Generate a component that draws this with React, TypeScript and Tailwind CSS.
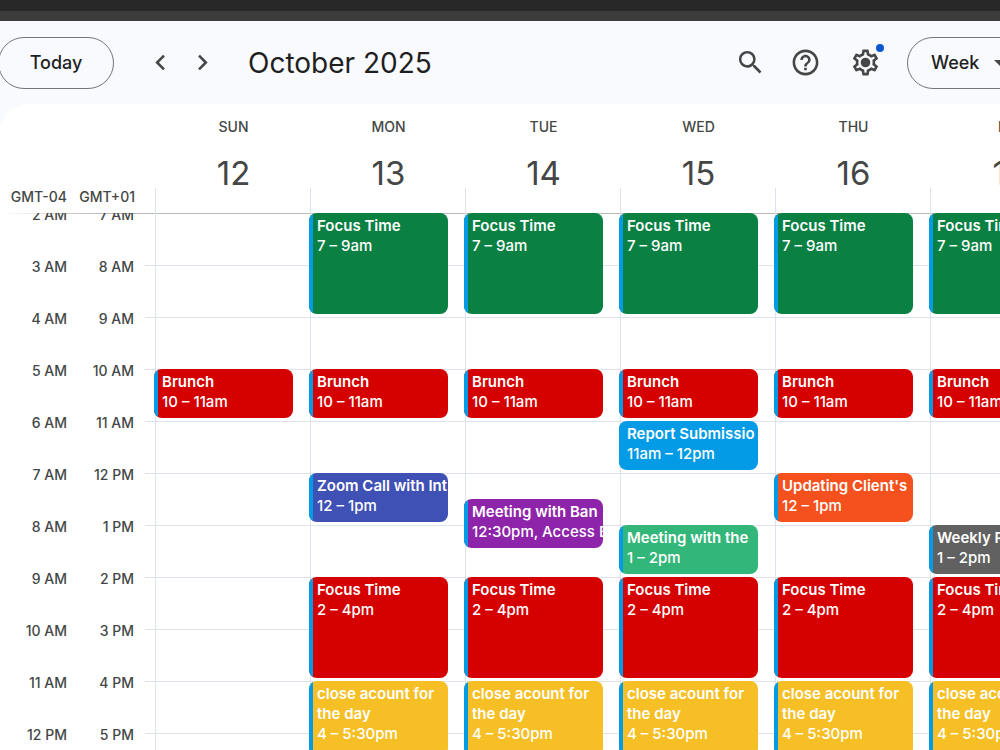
import React from 'react';
import { MdArrowDropDown, MdChevronLeft, MdChevronRight, MdHelpOutline, MdSearch } from 'react-icons/md';

interface CalendarEvent {
  title: string;
  time: string;
  // Hours on the 24h clock, halves allowed
  start: number;
  end: number;
  color: string;
  wrap?: boolean;
}

interface Day {
  name: string;
  date: number;
  events: CalendarEvent[];
}

const FIRST_HOUR = 7;

const HOURS = [
  { local: '2 AM', remote: '7 AM' },
  { local: '3 AM', remote: '8 AM' },
  { local: '4 AM', remote: '9 AM' },
  { local: '5 AM', remote: '10 AM' },
  { local: '6 AM', remote: '11 AM' },
  { local: '7 AM', remote: '12 PM' },
  { local: '8 AM', remote: '1 PM' },
  { local: '9 AM', remote: '2 PM' },
  { local: '10 AM', remote: '3 PM' },
  { local: '11 AM', remote: '4 PM' },
  { local: '12 PM', remote: '5 PM' },
  { local: '1 PM', remote: '6 PM' },
];

const morningFocus: CalendarEvent = { title: 'Focus Time', time: '7 – 9am', start: 7, end: 9, color: 'bg-[#0b8043]' };
const brunch: CalendarEvent = { title: 'Brunch', time: '10 – 11am', start: 10, end: 11, color: 'bg-[#d50000]' };
const afternoonFocus: CalendarEvent = { title: 'Focus Time', time: '2 – 4pm', start: 14, end: 16, color: 'bg-[#d50000]' };
const closeAccount: CalendarEvent = {
  title: 'close acount for the day',
  time: '4 – 5:30pm',
  start: 16,
  end: 17.5,
  color: 'bg-[#f6bf26]',
  wrap: true,
};

const workday = (...extra: CalendarEvent[]) => [morningFocus, brunch, ...extra, afternoonFocus, closeAccount];

const DAYS: Day[] = [
  { name: 'SUN', date: 12, events: [brunch] },
  {
    name: 'MON',
    date: 13,
    events: workday({ title: 'Zoom Call with Int', time: '12 – 1pm', start: 12, end: 13, color: 'bg-[#3f51b5]' }),
  },
  {
    name: 'TUE',
    date: 14,
    events: workday({ title: 'Meeting with Ban', time: '12:30pm, Access B', start: 12.5, end: 13.5, color: 'bg-[#8e24aa]' }),
  },
  {
    name: 'WED',
    date: 15,
    events: workday(
      { title: 'Report Submissio', time: '11am – 12pm', start: 11, end: 12, color: 'bg-[#039be5]' },
      { title: 'Meeting with the', time: '1 – 2pm', start: 13, end: 14, color: 'bg-[#33b679]' }
    ),
  },
  {
    name: 'THU',
    date: 16,
    events: workday({ title: "Updating Client's", time: '12 – 1pm', start: 12, end: 13, color: 'bg-[#f4511e]' }),
  },
  {
    name: 'FRI',
    date: 17,
    events: workday({ title: 'Weekly Report', time: '1 – 2pm', start: 13, end: 14, color: 'bg-[#616161]' }),
  },
  { name: 'SAT', date: 18, events: [] },
];

// Each grid row is half an hour
const rowOf = (hour: number) => (hour - FIRST_HOUR) * 2 + 1;

const SettingsIcon: React.FC = () => (
  <svg viewBox="0 0 24 24" className="size-[31px]" fill="currentColor" aria-hidden="true">
    <path d="M19.43 12.98c.04-.32.07-.64.07-.98 0-.34-.03-.66-.07-.98l2.11-1.65c.19-.15.24-.42.12-.64l-2-3.46a.5.5 0 0 0-.61-.22l-2.49 1c-.52-.4-1.08-.73-1.69-.98l-.38-2.65A.488.488 0 0 0 14 2h-4c-.25 0-.46.18-.49.42l-.38 2.65c-.61.25-1.17.59-1.69.98l-2.49-1a.5.5 0 0 0-.61.22l-2 3.46c-.13.22-.07.49.12.64l2.11 1.65c-.04.32-.07.65-.07.98 0 .33.03.66.07.98l-2.11 1.65c-.19.15-.24.42-.12.64l2 3.46c.12.22.39.3.61.22l2.49-1c.52.4 1.08.73 1.69.98l.38 2.65c.03.24.24.42.49.42h4c.25 0 .46-.18.49-.42l.38-2.65c.61-.25 1.17-.59 1.69-.98l2.49 1c.23.09.49 0 .61-.22l2-3.46c.12-.22.07-.49-.12-.64l-2.11-1.65zm-1.98-1.71c.04.31.05.52.05.73 0 .21-.02.43-.05.73l-.14 1.13.89.7 1.08.84-.7 1.21-1.27-.51-1.04-.42-.9.68c-.43.32-.84.56-1.25.73l-1.06.43-.16 1.13-.2 1.35h-1.4l-.19-1.35-.16-1.13-1.06-.43c-.43-.18-.83-.41-1.23-.71l-.91-.7-1.06.43-1.27.51-.7-1.21 1.08-.84.89-.7-.14-1.13c-.03-.31-.05-.54-.05-.74s.02-.43.05-.73l.14-1.13-.89-.7-1.08-.84.7-1.21 1.27.51 1.04.42.9-.68c.43-.32.84-.56 1.25-.73l1.06-.43.16-1.13.2-1.35h1.39l.19 1.35.16 1.13 1.06.43c.43.18.83.41 1.23.71l.91.7 1.06-.43 1.27-.51.7 1.21-1.07.85-.89.7.14 1.13z" />
    <circle cx="12" cy="12" r="3.7" />
  </svg>
);

const Toolbar: React.FC = () => (
  <header className="-mr-11 -ml-0.5 flex h-[83px] shrink-0 items-center text-[#444746]">
    <button
      type="button"
      className="h-[52px] w-[116px] shrink-0 rounded-full border border-[#747775] text-lg font-medium text-[#1f1f1f]"
    >
      Today
    </button>
    <div className="ml-[31px] flex gap-[11px]">
      <button type="button" aria-label="Previous week">
        <MdChevronLeft className="size-[31px]" />
      </button>
      <button type="button" aria-label="Next week">
        <MdChevronRight className="size-[31px]" />
      </button>
    </div>
    <h1 className="ml-[30px] text-[28px] leading-8 whitespace-nowrap text-[#1f1f1f]">October 2025</h1>

    <div className="ml-auto flex items-center gap-6">
      <button type="button" aria-label="Search">
        <MdSearch className="size-[31px]" />
      </button>
      <button type="button" aria-label="Support">
        <MdHelpOutline className="size-[31px]" />
      </button>
      <button type="button" aria-label="Settings" className="relative mr-0.5 ml-[5px]">
        <SettingsIcon />
        <span className="absolute -top-[3px] -right-[3px] size-2 rounded-full bg-[#0b57d0]" />
      </button>
      <div className="relative">
        <select
          aria-label="Calendar view"
          defaultValue="Week"
          className="h-[52px] w-[137px] appearance-none rounded-full border border-[#747775] pl-[23px] text-lg font-medium text-[#1f1f1f]"
        >
          <option>Day</option>
          <option>Week</option>
          <option>Month</option>
        </select>
        <MdArrowDropDown className="pointer-events-none absolute top-2.5 right-7 size-[31px]" />
      </div>
    </div>
  </header>
);

const EventCard: React.FC<{ event: CalendarEvent }> = ({ event }) => (
  <button
    type="button"
    className={`col-start-1 mr-[17px] mb-[3px] -ml-0.5 flex overflow-hidden rounded-lg text-left text-[15px] leading-5 text-white ${event.color}`}
    style={{ gridRow: `${rowOf(event.start)} / ${rowOf(event.end)}` }}
  >
    <span className="w-1 shrink-0 self-stretch bg-[#039be5]" />
    <span className={`min-w-0 self-start pt-[3px] pl-1 ${event.wrap ? '' : 'whitespace-nowrap'}`}>
      <span className="block font-semibold">{event.title}</span>
      <span className="block font-medium">{event.time}</span>
    </span>
  </button>
);

const DayColumn: React.FC<{ day: Day }> = ({ day }) => (
  <div className="grid auto-rows-[26px] grid-cols-[minmax(0,1fr)] border-l border-[#dde3ea]">
    {HOURS.map((hour, index) => (
      <div
        key={hour.remote}
        className="col-start-1 border-t border-[#dde3ea] first:border-transparent"
        style={{ gridRow: `${index * 2 + 1} / span 2` }}
      />
    ))}
    {day.events.map((event) => (
      <EventCard key={event.start} event={event} />
    ))}
  </div>
);

const App: React.FC = () => {
  return (
    <div className="flex h-screen flex-col overflow-hidden bg-[#f8fafd] font-['Inter','Liberation_Sans',sans-serif]">
      {/* Browser chrome */}
      <div className="h-[11px] shrink-0 bg-[#282828]" />
      <div className="h-[10px] shrink-0 bg-[#3c3c3c]" />

      <Toolbar />

      <main className="flex min-h-0 flex-1 flex-col overflow-hidden rounded-tl-[28px] bg-white text-[#444746]">
        {/* Day headings */}
        <div className="flex h-[109px] shrink-0">
          <div className="flex w-[155px] shrink-0 items-end pb-1.5 text-right text-sm font-medium">
            <span className="w-[67px]">GMT-04</span>
            <span className="w-[68px]">GMT+01</span>
          </div>
          <div className="grid flex-1 grid-cols-[repeat(7,minmax(155px,1fr))]">
            {DAYS.map((day) => (
              <div key={day.name} className="flex flex-col pt-[13px] text-center">
                <span className="pl-0.5 text-sm font-medium">{day.name}</span>
                <span className="mt-[22px] pl-0.5 text-[33px] leading-7">{day.date}</span>
                <div className="mt-auto h-[25px] border-l border-[#dde3ea]" />
              </div>
            ))}
          </div>
        </div>

        {/* Hours and events */}
        <div className="min-h-0 flex-1 overflow-hidden">
          <div className="-mb-px h-px bg-linear-to-r from-transparent to-[#b8bbba] to-10%" />
          <div className="flex">
            <div className="-mt-2 w-[145px] shrink-0 text-right text-sm leading-5 font-medium">
              {HOURS.map((hour) => (
                <div key={hour.remote} className="flex h-[52px]">
                  <span className="w-[67px]">{hour.local}</span>
                  <span className="w-[67px]">{hour.remote}</span>
                </div>
              ))}
            </div>
            <div className="w-[10px] shrink-0">
              {HOURS.map((hour) => (
                <div key={hour.remote} className="h-[52px] border-t border-[#dde3ea] first:border-transparent" />
              ))}
            </div>
            <div className="grid flex-1 grid-cols-[repeat(7,minmax(155px,1fr))]">
              {DAYS.map((day) => (
                <DayColumn key={day.name} day={day} />
              ))}
            </div>
          </div>
        </div>
      </main>
    </div>
  );
};

export default App;
